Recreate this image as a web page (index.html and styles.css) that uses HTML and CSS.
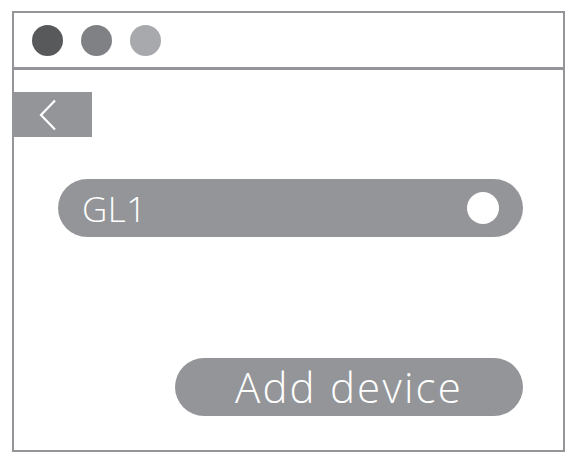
FILE: index.html
```html
<!DOCTYPE html>
<html>
<head>
<meta charset="utf-8">
<link rel="stylesheet" href="styles.css">
</head>
<body>
<div class="window">
  <div class="titlebar">
    <span class="dot dot-dark"></span>
    <span class="dot dot-mid"></span>
    <span class="dot dot-light"></span>
  </div>
  <div class="content">
    <div class="back">
      <svg width="20" height="32" viewBox="0 0 20 32"><path d="M17 1.5 L3 16 L17 30.5" fill="none" stroke="#fff" stroke-width="2.2"/></svg>
    </div>
    <div class="device">
      <span class="device-name">GL1</span>
      <span class="knob"></span>
    </div>
    <div class="add-row">
      <div class="add">Add device</div>
    </div>
  </div>
</div>
</body>
</html>
```
FILE: styles.css
```css
html, body { margin: 0; padding: 0; background: #fff; }
body { padding: 11px 0 0 12px; font-family: "Open Sans", "Noto Sans", sans-serif; }
.window {
  width: 549px;
  height: 437px;
  border: 2px solid #949598;
  display: flex;
  flex-direction: column;
}
.titlebar {
  height: 54px;
  border-bottom: 3px solid #949598;
  display: flex;
  align-items: center;
  gap: 18px;
  padding-left: 18px;
}
.dot { width: 31px; height: 31px; border-radius: 50%; display: block; }
.dot-dark { background: #58595b; }
.dot-mid { background: #808184; }
.dot-light { background: #a7a9ac; }
.content { display: flex; flex-direction: column; padding-top: 22px; }
.back {
  width: 78px; height: 45px; background: #939598;
  display: flex; align-items: center; padding-left: 24px; box-sizing: border-box;
}
.back svg { display: block; }
.device {
  margin: 42px 0 0 44px;
  width: 465px; height: 58px; border-radius: 29px; background: #939598;
  display: flex; align-items: center; justify-content: space-between;
  padding: 0 24px 0 24px; box-sizing: border-box;
}
.device-name { color: #fff; font-weight: 300; font-size: 35px; line-height: 1; letter-spacing: 0.5px; }
.knob { width: 32px; height: 32px; border-radius: 50%; background: #fff; display: block; }
.add-row { display: flex; justify-content: flex-end; padding-right: 40px; margin-top: 121px; }
.add {
  width: 348px; height: 58px; border-radius: 29px; background: #939598;
  color: #fff; font-weight: 300; font-size: 42px; line-height: 58px; text-align: center;
  letter-spacing: 2.2px;
}
```
